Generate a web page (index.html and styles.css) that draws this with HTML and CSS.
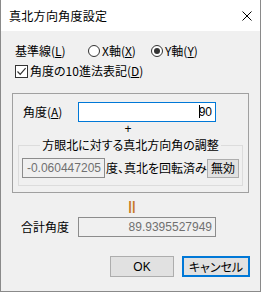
FILE: index.html
```html
<!DOCTYPE html>
<html lang="ja">
<head>
    <meta charset="UTF-8">
    <title>真北方向角度設定</title>
    <link rel="stylesheet" href="styles.css">
</head>
<body>
    <div class="dialog">
        <div class="titlebar">
            <span class="title">真北方向角度設定</span>
            <svg class="close" width="10" height="10" viewBox="0 0 10 10">
                <path d="M0.5 0.5 L9.5 9.5 M9.5 0.5 L0.5 9.5" stroke="#000" stroke-width="1"/>
            </svg>
        </div>
        <div class="content">
            <div class="row base-row">
                <span class="base-label">基準線(<u>L</u>)</span>
                <span class="radio-item x-item"><span class="radio"></span>X軸(<u>X</u>)</span>
                <span class="radio-item"><span class="radio checked"></span>Y軸(<u>Y</u>)</span>
            </div>
            <div class="row check-row">
                <span class="checkbox">
                    <svg width="11" height="11" viewBox="0 0 11 11">
                        <path d="M1.5 5.5 L4.2 8.3 L9.6 2.2" fill="none" stroke="#333" stroke-width="1.2"/>
                    </svg>
                </span>
                角度の10進法表記(<u>D</u>)
            </div>
            <div class="group">
                <div class="angle-row">
                    <span class="angle-label">角度(<u>A</u>)</span>
                    <div class="field active"><span class="caret"></span>90</div>
                </div>
                <div class="plus">+</div>
                <fieldset class="adjust">
                    <legend>方眼北に対する真北方向角の調整</legend>
                    <div class="adjust-row">
                        <div class="field disabled offset">-0.060447205</div>
                        <span class="adjust-text">度、真北を回転済み</span>
                        <span class="btn small-btn">無効</span>
                    </div>
                </fieldset>
            </div>
            <div class="equals">||</div>
            <div class="total-row">
                <span class="total-label">合計角度</span>
                <div class="field disabled">89.9395527949</div>
            </div>
            <div class="buttons">
                <span class="btn ok">OK</span>
                <span class="btn cancel">キャンセル</span>
            </div>
        </div>
    </div>
</body>
</html>
```
FILE: styles.css
```css
* {
    margin: 0;
    padding: 0;
    box-sizing: border-box;
}
body {
    width: 262px;
    height: 292px;
    background-color: #ffffff;
    font-family: "Noto Sans CJK JP", "Liberation Sans", sans-serif;
    font-size: 12px;
    line-height: 16px;
    color: #000;
    font-feature-settings: "palt";
}
.dialog {
    width: 261px;
    height: 292px;
    border: 1px solid #8a8a8a;
    border-top: none;
    background-color: #f0f0f0;
    display: flex;
    flex-direction: column;
}
.titlebar {
    height: 31px;
    background-color: #ffffff;
    display: flex;
    align-items: center;
    justify-content: space-between;
    padding-left: 8px;
    padding-right: 8px;
}
.title {
    font-size: 12px;
    letter-spacing: 0.3px;
}
.content {
    padding-left: 11px;
}
.row {
    display: flex;
    align-items: center;
    height: 16px;
    margin-left: 3px;
}
.base-row {
    margin-top: 12px;
}
.base-label {
    width: 73px;
}
.radio-item {
    display: flex;
    align-items: center;
}
.x-item {
    width: 63px;
}
.radio {
    width: 12px;
    height: 12px;
    border: 1px solid #333;
    border-radius: 50%;
    margin-right: 2px;
    display: flex;
    align-items: center;
    justify-content: center;
    background-color: #fff;
}
.radio.checked::after {
    content: "";
    width: 6px;
    height: 6px;
    border-radius: 50%;
    background-color: #333;
}
.check-row {
    margin-top: 4px;
}
.checkbox {
    width: 13px;
    height: 13px;
    border: 1px solid #333;
    background-color: #fff;
    margin-right: 2px;
    display: flex;
    align-items: center;
    justify-content: center;
}
.group {
    margin-top: 14px;
    width: 237px;
    height: 100px;
    border: 1px solid #a0a0a0;
    padding-top: 8px;
}
.angle-row {
    display: flex;
    align-items: center;
    padding-left: 10px;
}
.angle-label {
    width: 55px;
}
.field {
    width: 138px;
    height: 20px;
    border: 1px solid #8c8c8c;
    text-align: right;
    padding-right: 3px;
    line-height: 18px;
    font-family: "Liberation Sans", "Noto Sans CJK JP", sans-serif;
    font-size: 12px;
}
.field.active {
    border-color: #0078d7;
    background-color: #fff;
    color: #000;
}
.caret {
    display: inline-block;
    width: 1px;
    height: 13px;
    background-color: #000;
    vertical-align: -2px;
    margin-right: -1px;
}
.field.disabled {
    background-color: #f0f0f0;
    color: #707070;
}
.field.offset {
    width: 83px;
}
.plus {
    margin-top: 2px;
    height: 10px;
    line-height: 10px;
    text-align: center;
    padding-right: 5px;
    font-family: "Liberation Sans", sans-serif;
    font-size: 12px;
}
.adjust {
    margin: 4px 5px 0 5px;
    width: 225px;
    border: 1px solid #dcdcdc;
    padding: 6px 3px 7px 3px;
}
.adjust legend {
    margin: 0 auto;
    padding: 0 2px;
    line-height: 14px;
}
.adjust-row {
    display: flex;
    align-items: center;
}
.adjust-text {
    margin-left: 1px;
}
.btn {
    display: flex;
    align-items: center;
    justify-content: center;
    background-color: #e1e1e1;
    border: 1px solid #adadad;
}
.small-btn {
    margin-left: auto;
    width: 32px;
    height: 19px;
}
.equals {
    margin-top: 7px;
    height: 12px;
    line-height: 12px;
    text-align: center;
    padding-right: 8px;
    color: #c87a26;
    font-family: "Liberation Sans", sans-serif;
    font-weight: bold;
    font-size: 13px;
}
.total-row {
    display: flex;
    align-items: center;
    margin-top: 5px;
    padding-left: 9px;
}
.total-label {
    width: 57px;
}
.buttons {
    display: flex;
    justify-content: flex-end;
    gap: 8px;
    margin-top: 19px;
    margin-right: 10px;
}
.ok {
    width: 64px;
    height: 21px;
    font-family: "Liberation Sans", sans-serif;
}
.cancel {
    width: 68px;
    height: 21px;
    border: 2px solid #0078d7;
}
```
